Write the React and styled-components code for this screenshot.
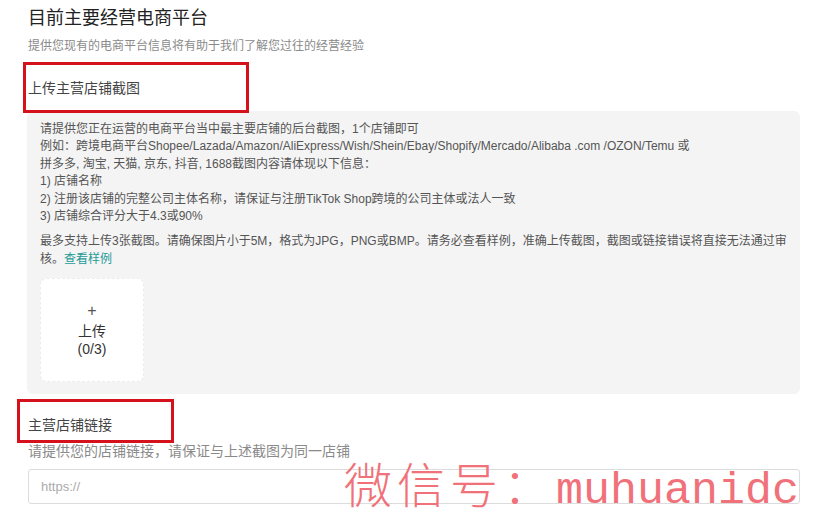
import React from 'react'
import styled, { createGlobalStyle } from 'styled-components'

const GlobalStyle = createGlobalStyle`
  html, body {
    margin: 0;
    padding: 0;
    background: #ffffff;
  }
  body {
    font-family: "Liberation Sans", "Noto Sans CJK SC", sans-serif;
  }
`

const Page = styled.div`
  position: relative;
  width: 816px;
  height: 526px;
  overflow: hidden;
  padding: 7px 16px 0 28px;
  box-sizing: border-box;
`

const Title = styled.h2`
  margin: 0;
  font-size: 18px;
  font-weight: 400;
  line-height: 22px;
  color: #222;
`

const SubTitle = styled.p`
  margin: 9px 0 0;
  font-size: 12px;
  line-height: 16px;
  color: #8a8a8a;
`

const Label = styled.div`
  position: relative;
  margin: ${p => p.$mt} 0 0;
  font-size: 14px;
  line-height: 20px;
  color: #444;
`

// the red rectangles sit over the labels as annotations
const Mark = styled.span`
  position: absolute;
  left: ${p => p.$l}px;
  top: ${p => p.$t}px;
  width: ${p => p.$w}px;
  height: ${p => p.$h}px;
  border: 3px solid #d5121c;
  box-sizing: border-box;
  pointer-events: none;
`

const Panel = styled.div`
  margin: 13px 0 0 -1px;
  background: #f4f4f4;
  border-radius: 6px;
  padding: 10px 4px 12px 13px;
  font-size: 12px;
  line-height: 17.4px;
  color: #555;
`

const Line = styled.div`
  white-space: nowrap;
`

const Note = styled.div`
  margin-top: 8px;
  white-space: nowrap;
`

const Link = styled.a`
  color: #1d9a96;
  text-decoration: none;
  cursor: pointer;
`

const Upload = styled.div`
  margin-top: 10px;
  width: 104px;
  height: 104px;
  background: #fff;
  border: 1px dashed #ececec;
  border-radius: 7px;
  box-sizing: border-box;
  display: flex;
  flex-direction: column;
  align-items: center;
  justify-content: center;
  color: #333;
  font-size: 14px;
  line-height: 18px;
`

const Plus = styled.span`
  font-size: 16px;
  font-weight: 300;
  color: #555;
  margin-bottom: 2px;
`

const Helper = styled.p`
  margin: 8px 0 0;
  font-size: 14px;
  line-height: 17px;
  color: #8a8a8a;
`

const Input = styled.input`
  display: block;
  margin-top: 9px;
  width: 772px;
  height: 35px;
  box-sizing: border-box;
  border: 1px solid #dcdcdc;
  border-radius: 3px;
  padding: 0 12px;
  font-family: "Liberation Sans", sans-serif;
  font-size: 13px;
  color: #333;
  outline: none;
  &::placeholder {
    color: #aaa;
  }
`

const Watermark = styled.div`
  position: absolute;
  left: 344px;
  top: 447px;
  display: flex;
  align-items: baseline;
  color: #f07179;
  white-space: nowrap;
  pointer-events: none;
`

const WmCjk = styled.span`
  font-family: "Noto Sans CJK SC", sans-serif;
  font-weight: 300;
  font-size: 48px;
  letter-spacing: 5px;
`

const WmLatin = styled.span`
  font-family: "Liberation Mono", monospace;
  font-size: 45px;
`

export default function App() {
  return (
    <Page>
      <GlobalStyle />
      <Title>目前主要经营电商平台</Title>
      <SubTitle>提供您现有的电商平台信息将有助于我们了解您过往的经营经验</SubTitle>

      <Label $mt="24px">
        上传主营店铺截图
        <Mark $l={-5} $t={-16} $w={226} $h={51} />
      </Label>

      <Panel>
        <Line>请提供您正在运营的电商平台当中最主要店铺的后台截图，1个店铺即可</Line>
        <Line>例如：跨境电商平台Shopee/Lazada/Amazon/AliExpress/Wish/Shein/Ebay/Shopify/Mercado/Alibaba .com /OZON/Temu 或</Line>
        <Line>拼多多, 淘宝, 天猫, 京东, 抖音, 1688截图内容请体现以下信息：</Line>
        <Line>1) 店铺名称</Line>
        <Line>2) 注册该店铺的完整公司主体名称，请保证与注册TikTok Shop跨境的公司主体或法人一致</Line>
        <Line>3) 店铺综合评分大于4.3或90%</Line>
        <Note>
          最多支持上传3张截图。请确保图片小于5M，格式为JPG，PNG或BMP。请务必查看样例，准确上传截图，截图或链接错误将直接无法通过审<br />
          核。<Link>查看样例</Link>
        </Note>
        <Upload>
          <Plus>+</Plus>
          <span>上传</span>
          <span>(0/3)</span>
        </Upload>
      </Panel>

      <Label $mt="21px">
        主营店铺链接
        <Mark $l={-11} $t={-16} $w={157} $h={44} />
      </Label>
      <Helper>请提供您的店铺链接，请保证与上述截图为同一店铺</Helper>
      <Input placeholder="https://" />

      <Watermark>
        <WmCjk>微信号：</WmCjk>
        <WmLatin>muhuanidc</WmLatin>
      </Watermark>
    </Page>
  )
}
